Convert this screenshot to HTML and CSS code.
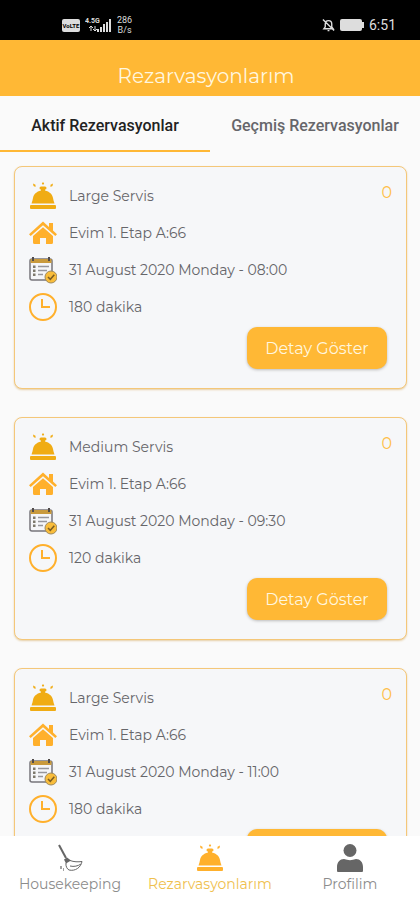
FILE: index.html
```
<!DOCTYPE html>
<html lang="tr">
    <head>
        <meta charset="utf-8">
        <meta name="viewport" content="width=device-width, initial-scale=1">
        <title>Rezarvasyonlarım</title>
        <link rel="stylesheet" href="styles.css">
    </head>
    <body>
        <!-- icons shared by the cards and the bottom menu -->
        <svg class="icon-defs" aria-hidden="true">
            <symbol id="bell" viewBox="0 0 28 28">
                <path d="M10.500 6q0-1.500 1.500-1.500h4q1.500 0 1.500 1.500T16 7.500v1c4.500 1 7.500 4 8 7.500.3 2 .8 3.500 1.500 5.500h-23C3.200 19.500 3.700 18 4 16c.5-3.500 3.500-6.500 8-7.500v-1Q10.500 7.500 10.500 6z"/>
                <rect x="1" y="23" width="26" height="4" rx="1"/>
                <path d="M14 0l1.200 1.500L14 3l-1.200-1.500zM4 1.500l2.500 1.200v2.300L4.500 4zM24 1.500l-2.500 1.200v2.300l2-1z"/>
            </symbol>
            <symbol id="house" viewBox="0 0 28 28">
                <path d="M14 2.500L20 8V4h4v7.500l4 3.700-1.700 1.800L14 6.200 1.700 17 0 15.200z"/>
                <path d="M14 8.200l10 8.800v6.500a1.500 1.500 0 0 1-1.500 1.500H17v-6h-6v6H5.500A1.500 1.500 0 0 1 4 23.500V17z"/>
            </symbol>
            <symbol id="calendar" viewBox="0 0 28 28">
                <rect x="1" y="3" width="22" height="21" rx="2" fill="#f5f6f9" stroke="#77767b" stroke-width="1.500"/>
                <path d="M1.500 3h21v4h-21z" fill="#c99a3d"/>
                <path d="M4 1v4M20 1v4" stroke="#514c4b" stroke-width="2"/>
                <path d="M9 10.500h11M9 14.500h9M9 18.500h5" stroke="#96969c" stroke-width="1.500"/>
                <path d="M4 9.500h2.500V12H4zM4 13.500h2.500V16H4zM4 17.500h2.500V20H4z" fill="#7d786c"/>
                <circle cx="22" cy="21" r="6" fill="#f9bd3b" stroke="#a08a5c"/>
                <path d="M19 21l2.300 2.300 4-4.500" fill="none" stroke="#7a5c22" stroke-width="1.500"/>
            </symbol>
            <symbol id="clock" viewBox="0 0 28 28">
                <circle cx="14" cy="14" r="13" fill="none" stroke="currentColor" stroke-width="2"/>
                <path d="M13 6v8h8" fill="none" stroke="currentColor" stroke-width="2"/>
            </symbol>
            <symbol id="broom" viewBox="0 0 28 28">
                <path d="M3 1l7 13" fill="none" stroke="currentColor" stroke-width="2"/>
                <path d="M8 15.500l3-2 4 3-5 3z"/>
                <path d="M14 16.500c4 1.500 8 1.500 12 1-1 6-7 10-13 8.500-2-1-3.500-4-3-7M25 20c-3 2-7 3-11 2" fill="none" stroke="currentColor"/>
                <path d="M4 22h2v3H4zM7 24h1v3H7z" opacity=".6"/>
            </symbol>
            <symbol id="person" viewBox="0 0 28 28">
                <circle cx="14" cy="6.500" r="6.500"/>
                <path d="M1 27v-4c0-5 3-8 7-8 4 1.500 8 1.500 12 0 4 0 7 3 7 8v4a1 1 0 0 1-1 1H2a1 1 0 0 1-1-1z"/>
            </symbol>
        </svg>

        <div class="status-bar">
            <div class="status-left">
                <span class="volte">VoLTE</span>
                <svg class="signal" viewBox="0 0 27 18" aria-hidden="true">
                    <text x="0" y="7">4.5G</text>
                    <path d="M6 10v5M4 12l2-2 2 2M10 10v5M8 13l2 2 2-2" fill="none" stroke="#ddd"/>
                    <path d="M12 13h2v3h-2zM15 11h2v5h-2zM18 8h2v8h-2zM21 6h2v10h-2zM24 3h2v13h-2z"/>
                </svg>
                <span class="speed">286<br>B/s</span>
            </div>
            <div class="status-right">
                <svg class="muted" viewBox="0 0 14 14" aria-hidden="true">
                    <path d="M2 11h10l-1.500-2V6c0-5-7-5-7 0v3zM6 13h2M1 1l12 12" fill="none" stroke="#ddd" stroke-width="1.500"/>
                </svg>
                <svg class="battery" viewBox="0 0 24 12" aria-hidden="true">
                    <rect width="22" height="12" rx="2"/>
                    <rect x="22" y="3" width="2" height="6"/>
                </svg>
                <span>6:51</span>
            </div>
        </div>

        <header class="header">
            <h1>Rezarvasyonlarım</h1>
        </header>

        <div class="tabs">
            <button type="button" class="tab active">Aktif Rezervasyonlar</button>
            <button type="button" class="tab">Geçmiş Rezervasyonlar</button>
        </div>

        <main class="bookings">
            <article class="card">
                <span class="count">0</span>
                <ul>
                    <li><svg class="icon gold"><use href="#bell"/></svg>Large Servis</li>
                    <li><svg class="icon"><use href="#house"/></svg>Evim 1. Etap A:66</li>
                    <li><svg class="icon"><use href="#calendar"/></svg>31 August 2020 Monday - 08:00</li>
                    <li><svg class="icon"><use href="#clock"/></svg>180 dakika</li>
                </ul>
                <button type="button" class="detail">Detay Göster</button>
            </article>
            <article class="card">
                <span class="count">0</span>
                <ul>
                    <li><svg class="icon gold"><use href="#bell"/></svg>Medium Servis</li>
                    <li><svg class="icon"><use href="#house"/></svg>Evim 1. Etap A:66</li>
                    <li><svg class="icon"><use href="#calendar"/></svg>31 August 2020 Monday - 09:30</li>
                    <li><svg class="icon"><use href="#clock"/></svg>120 dakika</li>
                </ul>
                <button type="button" class="detail">Detay Göster</button>
            </article>
            <article class="card">
                <span class="count">0</span>
                <ul>
                    <li><svg class="icon gold"><use href="#bell"/></svg>Large Servis</li>
                    <li><svg class="icon"><use href="#house"/></svg>Evim 1. Etap A:66</li>
                    <li><svg class="icon"><use href="#calendar"/></svg>31 August 2020 Monday - 11:00</li>
                    <li><svg class="icon"><use href="#clock"/></svg>180 dakika</li>
                </ul>
                <button type="button" class="detail">Detay Göster</button>
            </article>
        </main>

        <nav class="menu">
            <a href="#housekeeping"><svg class="icon"><use href="#broom"/></svg>Housekeeping</a>
            <a href="#rezarvasyonlarim" class="active"><svg class="icon"><use href="#bell"/></svg>Rezarvasyonlarım</a>
            <a href="#profilim"><svg class="icon"><use href="#person"/></svg>Profilim</a>
        </nav>
    </body>
</html>
```

FILE: styles.css
```
* {
    box-sizing: border-box;
}

body {
    margin: 0;
    height: 100vh;
    display: flex;
    flex-direction: column;
    background: #fafafa;
    color: #66666a;
    font-family: Montserrat, Inter, sans-serif;
    font-size: 14px;
}

button {
    border: none;
    cursor: pointer;
}

.icon-defs {
    display: none;
}

.icon {
    width: 28px;
    height: 28px;
    flex: none;
    fill: currentColor;
}

.status-bar {
    flex: none;
    height: 40px;
    padding: 10px 24px 0 62px;
    display: flex;
    justify-content: space-between;
    align-items: center;
    background: #000;
    color: #ddd;
    font-family: Roboto, sans-serif;
}

.status-bar svg {
    fill: #ddd;
}

.status-left,
.status-right {
    display: flex;
    align-items: center;
    gap: 5px;
}

.volte {
    width: 18px;
    border-radius: 2px;
    background: #ddd;
    color: #000;
    font-size: 6px;
    font-weight: bold;
    line-height: 13px;
    text-align: center;
}

.signal {
    width: 27px;
    height: 18px;
    font-size: 7px;
    font-weight: bold;
}

.speed {
    font-size: 9px;
    line-height: 10px;
    text-align: center;
}

.muted {
    width: 13px;
    height: 14px;
}

.battery {
    width: 24px;
    height: 12px;
}

.header {
    flex: none;
    height: 56px;
    padding: 16px 8px 0 0;
    background: #ffb835;
    color: #fff6df;
    text-align: center;
}

.header h1 {
    margin: 0;
    font-size: 20px;
    font-weight: 400;
    line-height: 40px;
}

.tabs {
    flex: none;
    display: flex;
    height: 56px;
}

.tab {
    flex: 1;
    padding: 4px 0 0;
    background: none;
    border-bottom: 2px solid transparent;
    color: #66666a;
    font-family: Roboto, sans-serif;
    font-size: 16px;
    font-weight: 500;
    white-space: nowrap;
}

.tab.active {
    border-color: #ffb835;
    color: #222;
}

.bookings {
    flex: 1;
    min-height: 0;
    padding: 14px 13px 14px 14px;
    overflow-y: auto;
    scrollbar-width: none;
}

.card {
    position: relative;
    margin-bottom: 28px;
    padding: 10px 19px 19px 14px;
    display: flex;
    flex-direction: column;
    border: 1px solid #f4c779;
    border-radius: 8px;
    background: #f6f7f9;
    box-shadow: 0 1px 2px #e6cfa6;
}

.card ul {
    margin: 0;
    padding: 0;
    list-style: none;
}

.card li {
    height: 37px;
    display: flex;
    align-items: center;
    gap: 12px;
}

.card .icon {
    color: #ffb02c;
}

.card .gold {
    color: #f0ac14;
}

.count {
    position: absolute;
    top: 16px;
    right: 14px;
    color: #ffc04a;
    font-size: 16px;
    line-height: 20px;
}

.detail {
    align-self: flex-end;
    width: 140px;
    height: 42px;
    margin-top: 2px;
    padding: 0;
    border-radius: 10px;
    background: #ffb835;
    box-shadow: 0 1px 3px #bbb;
    color: #fff6df;
    font-family: inherit;
    font-size: 16px;
}

.menu {
    flex: none;
    height: 64px;
    padding-top: 8px;
    display: flex;
    background: #fff;
}

.menu a {
    flex: 1;
    display: flex;
    flex-direction: column;
    align-items: center;
    gap: 3px;
    color: #8c8c8c;
    font-size: 14px;
    line-height: 18px;
    text-decoration: none;
}

.menu .icon {
    color: #666;
}

.menu .active {
    color: #efc04e;
}

.menu .active .icon {
    color: #ffb02c;
}
```
